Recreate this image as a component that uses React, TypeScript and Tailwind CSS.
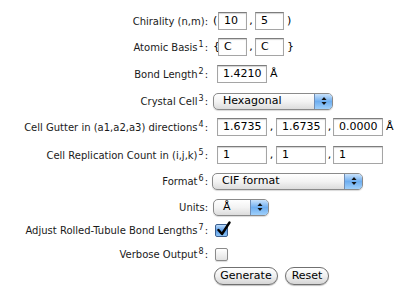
import React from "react";

const font = { fontFamily: '"DejaVu Sans", "Liberation Sans", sans-serif' };

function Sup({ n }: { n: string }) {
  return <sup className="text-[8px] top-[-4px] ml-[1px] mr-[1px]">{n}</sup>;
}

function Label({ children }: { children: React.ReactNode }) {
  return (
    <div className="w-[208px] shrink-0 text-right text-[10px] text-[#1a1a1a] whitespace-nowrap">
      {children}
    </div>
  );
}

function Input({ value, w }: { value: string; w: string }) {
  return (
    <div
      className={`${w} h-[18px] bg-white border border-[#a5a5a5] border-t-[#7d7d7d] shadow-[inset_0_1px_1px_rgba(0,0,0,0.18)] flex items-center pl-[5px] text-[11px] text-black`}
    >
      {value}
    </div>
  );
}

function Select({ value, w }: { value: string; w: string }) {
  return (
    <div
      className={`${w} h-[17px] rounded-[5px] border border-[#8a8a8a] bg-gradient-to-b from-white via-[#f3f3f3] to-[#dcdcdc] flex items-stretch overflow-hidden shadow-[0_1px_1px_rgba(0,0,0,0.15)]`}
    >
      <div className="flex-1 flex items-center pl-[9px] text-[11px] text-black">{value}</div>
      <div className="w-[18px] bg-gradient-to-b from-[#c9e2fb] via-[#6eaef0] to-[#9fd0fb] border-l border-[#6f8db5] flex items-center justify-center">
        <svg width="6" height="10" viewBox="0 0 6 10">
          <path d="M3 1 L5.5 4 L0.5 4 Z" fill="#111" />
          <path d="M3 9 L5.5 6 L0.5 6 Z" fill="#111" />
        </svg>
      </div>
    </div>
  );
}

function Button({ label, w }: { label: string; w: string }) {
  return (
    <div
      className={`${w} h-[18px] rounded-full border border-[#707070] bg-gradient-to-b from-white via-[#f0f0f0] to-[#d6d6d6] shadow-[0_1px_1px_rgba(0,0,0,0.25)] flex items-center justify-center text-[11px] text-black`}
    >
      {label}
    </div>
  );
}

export default function App() {
  return (
    <div className="w-[415px] h-[298px] bg-white overflow-hidden" style={font}>
      <div className="flex flex-col pt-[12px]">
        {/* Row 1 */}
        <div className="flex items-center h-[18px]">
          <Label>Chirality (n,m):</Label>
          <div className="flex items-center ml-[5px] text-[11px]">
            <span className="w-[5px]">(</span>
            <Input value="10" w="w-[29px]" />
            <span className="w-[8px] text-center">,</span>
            <Input value="5" w="w-[29px]" />
            <span className="ml-[3px]">)</span>
          </div>
        </div>
        {/* Row 2 */}
        <div className="flex items-center h-[18px] mt-[8px]">
          <Label>
            Atomic Basis<Sup n="1" />:
          </Label>
          <div className="flex items-center ml-[5px] text-[11px]">
            <span className="w-[5px]">{"{"}</span>
            <Input value="C" w="w-[29px]" />
            <span className="w-[8px] text-center">,</span>
            <Input value="C" w="w-[29px]" />
            <span className="ml-[3px]">{"}"}</span>
          </div>
        </div>
        {/* Row 3 */}
        <div className="flex items-center h-[18px] mt-[9px]">
          <Label>
            Bond Length<Sup n="2" />:
          </Label>
          <div className="flex items-center ml-[9px] text-[11px]">
            <Input value="1.4210" w="w-[50px]" />
            <span className="ml-[3px]">Å</span>
          </div>
        </div>
        {/* Row 4 */}
        <div className="flex items-center h-[18px] mt-[9px]">
          <Label>
            Crystal Cell<Sup n="3" />:
          </Label>
          <div className="ml-[5px]">
            <Select value="Hexagonal" w="w-[120px]" />
          </div>
        </div>
        {/* Row 5 */}
        <div className="flex items-center h-[18px] mt-[8px]">
          <Label>
            Cell Gutter in (a1,a2,a3) directions<Sup n="4" />:
          </Label>
          <div className="flex items-center ml-[9px] text-[11px]">
            <Input value="1.6735" w="w-[50px]" />
            <span className="w-[9px] text-center">,</span>
            <Input value="1.6735" w="w-[50px]" />
            <span className="w-[7px] text-center">,</span>
            <Input value="0.0000" w="w-[50px]" />
            <span className="ml-[3px]">Å</span>
          </div>
        </div>
        {/* Row 6 */}
        <div className="flex items-center h-[18px] mt-[10px]">
          <Label>
            Cell Replication Count in (i,j,k)<Sup n="5" />:
          </Label>
          <div className="flex items-center ml-[9px] text-[11px]">
            <Input value="1" w="w-[50px]" />
            <span className="w-[9px] text-center">,</span>
            <Input value="1" w="w-[50px]" />
            <span className="w-[7px] text-center">,</span>
            <Input value="1" w="w-[50px]" />
          </div>
        </div>
        {/* Row 7 */}
        <div className="flex items-center h-[18px] mt-[8px]">
          <Label>
            Format<Sup n="6" />:
          </Label>
          <div className="ml-[4px]">
            <Select value="CIF format" w="w-[151px]" />
          </div>
        </div>
        {/* Row 8 */}
        <div className="flex items-center h-[18px] mt-[8px]">
          <Label>Units:</Label>
          <div className="ml-[5px]">
            <Select value="Å" w="w-[56px]" />
          </div>
        </div>
        {/* Row 9 */}
        <div className="flex items-center h-[18px] mt-[5px]">
          <Label>
            Adjust Rolled-Tubule Bond Lengths<Sup n="7" />:
          </Label>
          <div className="ml-[7px] w-[13px] h-[13px] rounded-[2px] border border-[#3b5f8f] bg-gradient-to-b from-[#bcdcfb] via-[#5b9ce6] to-[#8cc4f7] relative">
            <svg className="absolute left-[1px] top-[-4px]" width="14" height="16" viewBox="0 0 14 16">
              <path d="M1.5 9 L5 13 L12.5 1.5" stroke="#000" strokeWidth="2.4" fill="none" strokeLinecap="round" strokeLinejoin="round" />
            </svg>
          </div>
        </div>
        {/* Row 10 */}
        <div className="flex items-center h-[18px] mt-[6px]">
          <Label>
            Verbose Output<Sup n="8" />:
          </Label>
          <div className="ml-[7px] w-[13px] h-[13px] rounded-[2px] border border-[#8a8a8a] bg-gradient-to-b from-white to-[#e2e2e2] shadow-[0_1px_1px_rgba(0,0,0,0.15)]" />
        </div>
        {/* Row 11 */}
        <div className="flex items-center h-[18px] mt-[4px]">
          <div className="w-[208px] shrink-0" />
          <div className="flex items-center ml-[6px] gap-[7px]">
            <Button label="Generate" w="w-[64px]" />
            <Button label="Reset" w="w-[44px]" />
          </div>
        </div>
      </div>
    </div>
  );
}
